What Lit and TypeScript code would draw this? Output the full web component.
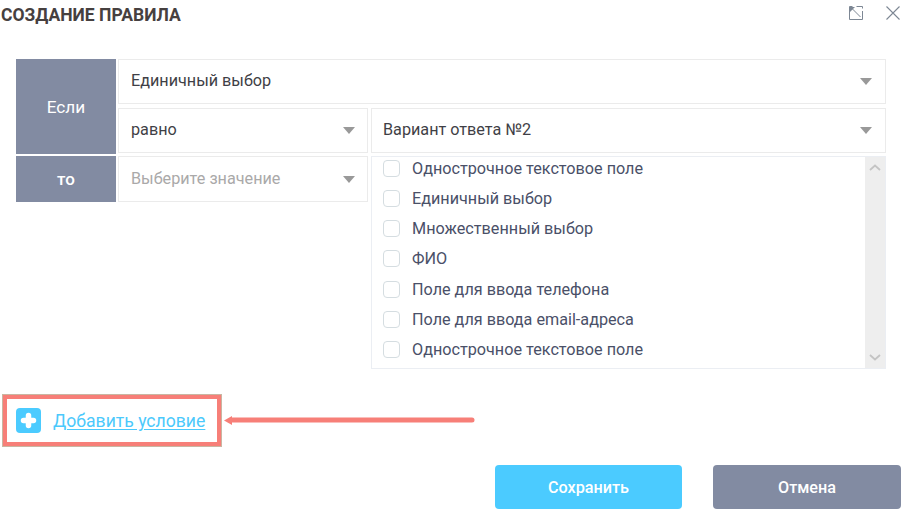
import { LitElement, html, css, svg } from "lit";
import { customElement } from "lit/decorators.js";

const OPTIONS = [
  "Однострочное текстовое поле",
  "Единичный выбор",
  "Множественный выбор",
  "ФИО",
  "Поле для ввода телефона",
  "Поле для ввода email-адреса",
  "Однострочное текстовое поле",
];

@customElement("app-root")
export class AppRoot extends LitElement {
  static styles = css`
    :host {
      display: block;
      width: 903px;
      height: 511px;
      position: relative;
      overflow: hidden;
      background: #fff;
      font-family: Roboto, "Noto Sans", sans-serif;
      font-size: 16.2px;
      color: #3f3f46;
    }
    .header {
      height: 59px;
      box-sizing: border-box;
      padding: 5px 3px 0 1px;
      display: flex;
      align-items: flex-start;
      justify-content: space-between;
    }
    .title {
      font-size: 17.5px;
      font-weight: 700;
      line-height: 21px;
      color: #46403f;
    }
    .header-icons {
      display: flex;
      gap: 23px;
      padding-top: 1px;
    }
    .header-icons svg { display: block; }
    .form {
      margin-left: 16px;
      width: 870px;
      display: grid;
      grid-template-columns: 102px 253px 515px;
      grid-template-rows: 49px 48px 213px;
    }
    .label {
      background: #828ba2;
      color: #fff;
      width: 100px;
      display: flex;
      align-items: center;
      justify-content: center;
    }
    .if { grid-row: 1 / 3; height: 95px; font-size: 17.2px; }
    .then { height: 46px; font-size: 17px; font-weight: 500; }
    .select {
      box-sizing: border-box;
      border: 1px solid #ebebeb;
      display: flex;
      align-items: center;
      justify-content: space-between;
      padding: 0 12px 2px 12px;
      background: #fff;
      color: #3f3f46;
      height: 45px;
      width: 250px;
    }
    .wide { grid-column: 2 / 4; width: 768px; padding-right: 13px; }
    .answer { width: 515px; padding-left: 11px; padding-right: 13px; }
    .placeholder { color: #aaa9a9; height: 46px; }
    .caret {
      width: 0;
      height: 0;
      border-left: 6.5px solid transparent;
      border-right: 6.5px solid transparent;
      border-top: 7px solid #999;
      margin-top: 2px;
    }
    .list {
      box-sizing: border-box;
      border: 1px solid #ebeef3;
      display: flex;
      height: 213px;
    }
    .options {
      flex: 1;
      padding: 0 0 0 11px;
      margin-top: -3.6px;
    }
    .option {
      height: 30.17px;
      display: flex;
      align-items: center;
      gap: 12px;
      color: #4a5068;
    }
    .check {
      box-sizing: border-box;
      width: 17px;
      height: 17px;
      border: 1px solid #d5dde1;
      border-radius: 4px;
      background: #fff;
      flex: none;
    }
    .bar {
      width: 20px;
      background: #eeeeee;
      display: flex;
      flex-direction: column;
      justify-content: space-between;
      align-items: center;
      padding: 7px 0;
      box-sizing: border-box;
    }
    .bar svg { display: block; }
    .add-row {
      margin: 25px 0 0 2px;
      width: 220px;
      height: 53px;
      box-sizing: border-box;
      border: 5px solid #f77f78;
      outline: 1px solid #c9b6a2;
      outline-offset: -1px;
      display: flex;
      align-items: center;
      padding-left: 9px;
      gap: 12px;
    }
    .plus { display: block; flex: none; }
    .add-link {
      color: #4bc9fc;
      font-size: 17.6px;
      text-decoration: underline;
      text-underline-offset: 2px;
      line-height: 20px;
      white-space: nowrap;
    }
    .arrow {
      position: absolute;
      left: 222px;
      top: 411px;
    }
    .actions {
      display: flex;
      margin: 18px 0 0 495px;
      gap: 31px;
    }
    .btn {
      height: 44px;
      border-radius: 4px;
      display: flex;
      align-items: center;
      justify-content: center;
      color: #fff;
      font-weight: 500;
    }
    .save { width: 187px; background: #4bcbff; }
    .cancel { width: 188px; background: #828ba2; }
  `;

  private caret() {
    return html`<span class="caret"></span>`;
  }

  render() {
    return html`
      <div class="header">
        <div class="title">СОЗДАНИЕ ПРАВИЛА</div>
        <div class="header-icons">
          <svg width="14" height="14" viewBox="0 0 14 14" fill="none" stroke="#7d8794" stroke-width="1">
            <path d="M3.5 .5H.5V13.5H13.5V5M7.5 .5H13.5V2.5" />
            <path d="M2 1.5L11.5 11" />
            <path d="M1 1H6L1 6Z" fill="#7d8794" stroke="none" />
          </svg>
          <svg width="14" height="14" viewBox="0 0 14 14" fill="none" stroke="#7d8794" stroke-width="1.1">
            <path d="M.5 .5L13.5 13.5M13.5 .5L.5 13.5" />
          </svg>
        </div>
      </div>
      <div class="form">
        <div class="label if">Если</div>
        <div class="select wide"><span>Единичный выбор</span>${this.caret()}</div>
        <div class="select"><span>равно</span>${this.caret()}</div>
        <div class="select answer"><span>Вариант ответа №2</span>${this.caret()}</div>
        <div class="label then">то</div>
        <div class="select placeholder"><span>Выберите значение</span>${this.caret()}</div>
        <div class="list">
          <div class="options">
            ${OPTIONS.map(
              (o) => html`<div class="option"><span class="check"></span><span>${o}</span></div>`
            )}
          </div>
          <div class="bar">
            <svg width="12" height="7" viewBox="0 0 12 7" fill="none" stroke="#c4c4c4" stroke-width="1.8">
              <path d="M1 6L6 1.5L11 6" />
            </svg>
            <svg width="12" height="7" viewBox="0 0 12 7" fill="none" stroke="#c4c4c4" stroke-width="1.8">
              <path d="M1 1L6 5.5L11 1" />
            </svg>
          </div>
        </div>
      </div>
      <div class="add-row">
        <svg class="plus" width="25" height="25" viewBox="0 0 25 25">
          <rect width="25" height="25" rx="4" fill="#4bcbff" />
          <path d="M12.5 7.5V17.5M7.5 12.5H17.5" stroke="#fff" stroke-width="5.5" stroke-linecap="round" />
        </svg>
        <span class="add-link">Добавить условие</span>
      </div>
      <div class="actions">
        <div class="btn save">Сохранить</div>
        <div class="btn cancel">Отмена</div>
      </div>
      <svg class="arrow" width="254" height="18" viewBox="0 0 254 18">
        ${svg`<path d="M9 9H250" stroke="#f77f78" stroke-width="5" stroke-linecap="round" />
        <path d="M2 9.5L10 5V14Z" fill="#f77f78" />`}
      </svg>
    `;
  }
}
